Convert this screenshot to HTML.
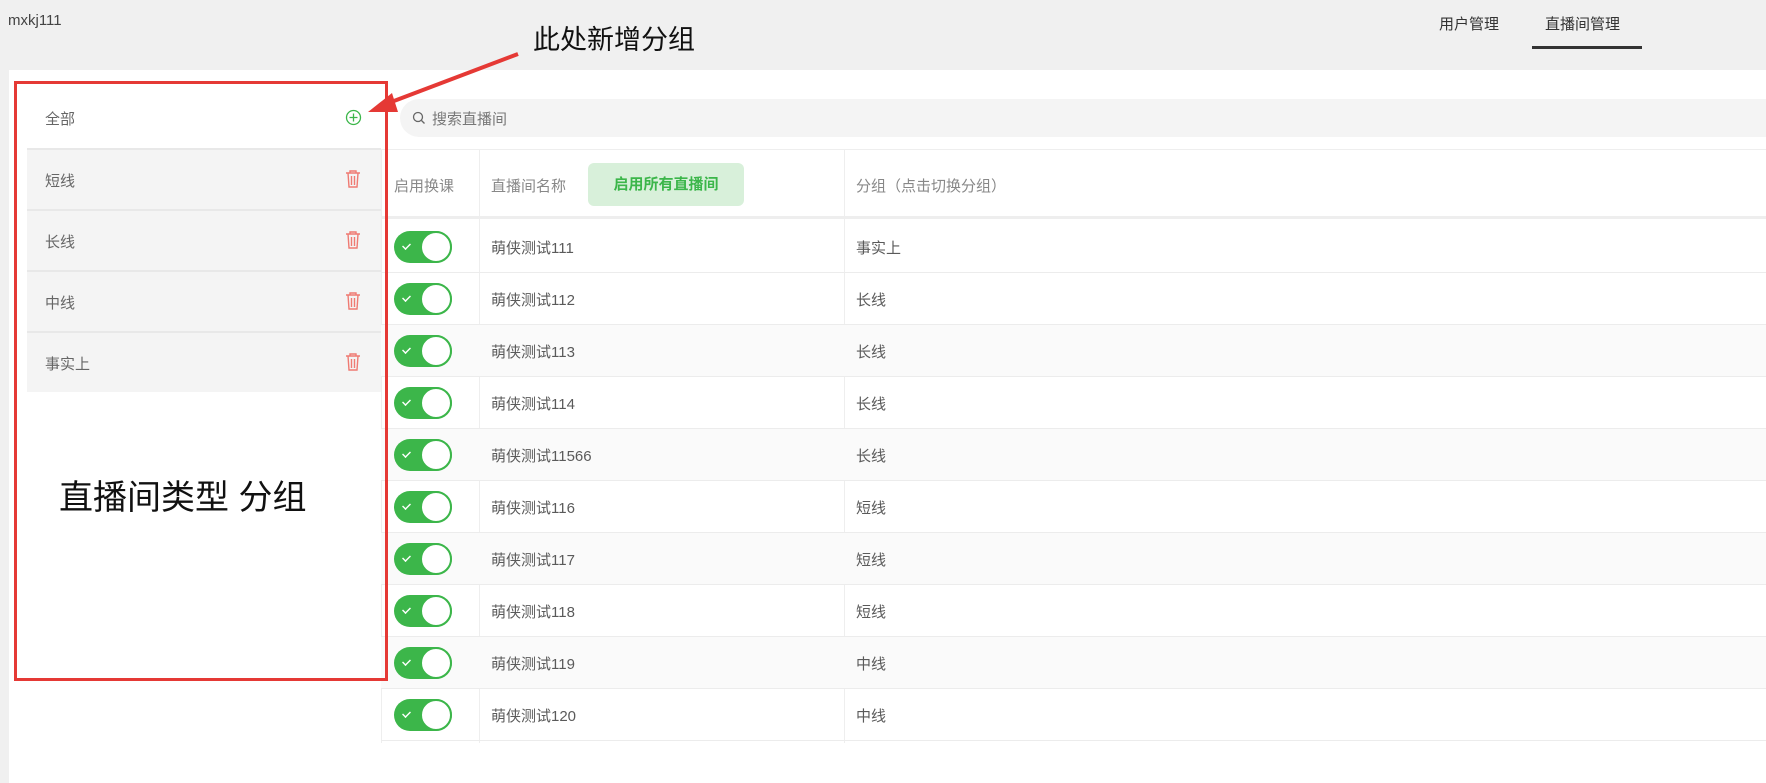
<!DOCTYPE html>
<html><head><meta charset="utf-8"><style>
*{margin:0;padding:0;box-sizing:border-box}
body{width:1766px;height:783px;background:#fff;font-family:"Liberation Sans","Noto Sans CJK SC",sans-serif;position:relative;overflow:hidden;color:#555}
.a{position:absolute}
.hdr{left:0;top:0;width:1766px;height:70px;background:#f0f0f0}
.row{position:absolute;left:381px;width:1385px;height:52px;border-bottom:1px solid #ececec;font-size:15px;color:#5a5a5a}
.row span{position:absolute;top:16px}
.tg{position:absolute;left:13px;top:10px;width:58px;height:32px;border-radius:16px;background:#3cb64a}
.tg:after{content:"";position:absolute;right:0;top:0;width:32px;height:32px;border-radius:50%;background:#fff;border:2px solid #3cb64a;box-sizing:border-box}
.tg i{position:absolute;left:9px;top:9px;width:7px;height:11px;border:solid #fff;border-width:0 2px 2px 0;transform:rotate(45deg) scale(.7)}
.li{position:absolute;left:27px;width:354px;height:61px;background:#f4f4f4;border-top:2px solid #e8e8e8;font-size:15px;color:#666}
.li span{position:absolute;left:18px;top:20px}
.li svg{position:absolute;left:318px;top:19px}
</style></head><body>
<div class="a hdr"></div>
<div class="a" style="left:0;top:70px;width:9px;height:713px;background:#f0f0f0"></div>
<div class="a" style="left:8px;top:12px;font-size:15px;color:#444">mxkj111</div>
<div class="a" style="left:1439px;top:13px;font-size:15px;color:#333">用户管理</div>
<div class="a" style="left:1545px;top:13px;font-size:15px;color:#333">直播间管理</div>
<div class="a" style="left:1532px;top:46px;width:110px;height:3px;background:#333"></div>
<div class="a" style="left:533px;top:18px;font-size:27px;color:#111">此处新增分组</div>

<div class="a" style="left:27px;top:88px;width:354px;height:60px;background:#fff;font-size:15px;color:#666"><span style="position:absolute;left:18px;top:20px">全部</span>
<svg style="position:absolute;left:318px;top:21px" width="17" height="17" viewBox="0 0 17 17"><circle cx="8.5" cy="8.5" r="7" fill="none" stroke="#3cb64a" stroke-width="1.3"/><path d="M8.5 4.5v8M4.5 8.5h8" stroke="#3cb64a" stroke-width="1.3"/></svg></div>
<div class="li" style="top:148px"><span>短线</span><svg width="16" height="20" viewBox="0 0 16 20"><path d="M1 4h14M5 4V2h6v2M3 4l1 14h8l1-14M6.5 7v9M9.5 7v9" fill="none" stroke="#ef7a72" stroke-width="1.4"/></svg></div>
<div class="li" style="top:209px"><span>长线</span><svg width="16" height="20" viewBox="0 0 16 20"><path d="M1 4h14M5 4V2h6v2M3 4l1 14h8l1-14M6.5 7v9M9.5 7v9" fill="none" stroke="#ef7a72" stroke-width="1.4"/></svg></div>
<div class="li" style="top:270px"><span>中线</span><svg width="16" height="20" viewBox="0 0 16 20"><path d="M1 4h14M5 4V2h6v2M3 4l1 14h8l1-14M6.5 7v9M9.5 7v9" fill="none" stroke="#ef7a72" stroke-width="1.4"/></svg></div>
<div class="li" style="top:331px"><span>事实上</span><svg width="16" height="20" viewBox="0 0 16 20"><path d="M1 4h14M5 4V2h6v2M3 4l1 14h8l1-14M6.5 7v9M9.5 7v9" fill="none" stroke="#ef7a72" stroke-width="1.4"/></svg></div>
<div class="a" style="left:59px;top:470px;font-size:34px;color:#111">直播间类型 分组</div>

<div class="a" style="left:400px;top:99px;width:1366px;height:38px;background:#f4f4f4;border-radius:19px 0 0 19px"></div>
<svg class="a" style="left:412px;top:111px" width="14" height="14" viewBox="0 0 14 14"><circle cx="6" cy="6" r="4.5" fill="none" stroke="#666" stroke-width="1.3"/><path d="M9.5 9.5l3 3" stroke="#666" stroke-width="1.3"/></svg>
<div class="a" style="left:432px;top:108px;font-size:15px;color:#777">搜索直播间</div>

<div class="a" style="left:381px;top:149px;width:1385px;height:70px;border-top:1px solid #eee;border-bottom:3px solid #eee"></div>
<div class="a" style="left:381px;top:149px;width:1px;height:594px;background:#eee"></div>
<div class="a" style="left:479px;top:149px;width:1px;height:594px;background:#eee"></div>
<div class="a" style="left:844px;top:149px;width:1px;height:594px;background:#eee"></div>
<div class="a" style="left:394px;top:175px;font-size:15px;color:#888">启用换课</div>
<div class="a" style="left:491px;top:175px;font-size:15px;color:#888">直播间名称</div>
<div class="a" style="left:588px;top:163px;width:156px;height:43px;background:#d8f0da;border-radius:6px;color:#3cb64a;font-size:15px;font-weight:bold;text-align:center;line-height:43px">启用所有直播间</div>
<div class="a" style="left:856px;top:175px;font-size:15px;color:#888">分组（点击切换分组）</div>

<div class="row" style="top:221px"><div class="tg"><i></i></div><span style="left:110px">萌侠测试111</span><span style="left:475px">事实上</span></div>
<div class="row" style="top:273px"><div class="tg"><i></i></div><span style="left:110px">萌侠测试112</span><span style="left:475px">长线</span></div>
<div class="row" style="top:325px;background:#fafafa"><div class="tg"><i></i></div><span style="left:110px">萌侠测试113</span><span style="left:475px">长线</span></div>
<div class="row" style="top:377px"><div class="tg"><i></i></div><span style="left:110px">萌侠测试114</span><span style="left:475px">长线</span></div>
<div class="row" style="top:429px;background:#fafafa"><div class="tg"><i></i></div><span style="left:110px">萌侠测试11566</span><span style="left:475px">长线</span></div>
<div class="row" style="top:481px"><div class="tg"><i></i></div><span style="left:110px">萌侠测试116</span><span style="left:475px">短线</span></div>
<div class="row" style="top:533px;background:#fafafa"><div class="tg"><i></i></div><span style="left:110px">萌侠测试117</span><span style="left:475px">短线</span></div>
<div class="row" style="top:585px"><div class="tg"><i></i></div><span style="left:110px">萌侠测试118</span><span style="left:475px">短线</span></div>
<div class="row" style="top:637px;background:#fafafa"><div class="tg"><i></i></div><span style="left:110px">萌侠测试119</span><span style="left:475px">中线</span></div>
<div class="row" style="top:689px"><div class="tg"><i></i></div><span style="left:110px">萌侠测试120</span><span style="left:475px">中线</span></div>

<div class="a" style="left:14px;top:81px;width:374px;height:600px;border:3px solid #e53935"></div>
<svg class="a" style="left:0;top:0" width="600" height="140"><path d="M518 54 L386 104" stroke="#e53935" stroke-width="4"/><path d="M368 112 L392 93 L398 112 Z" fill="#e53935"/></svg>
</body></html>
